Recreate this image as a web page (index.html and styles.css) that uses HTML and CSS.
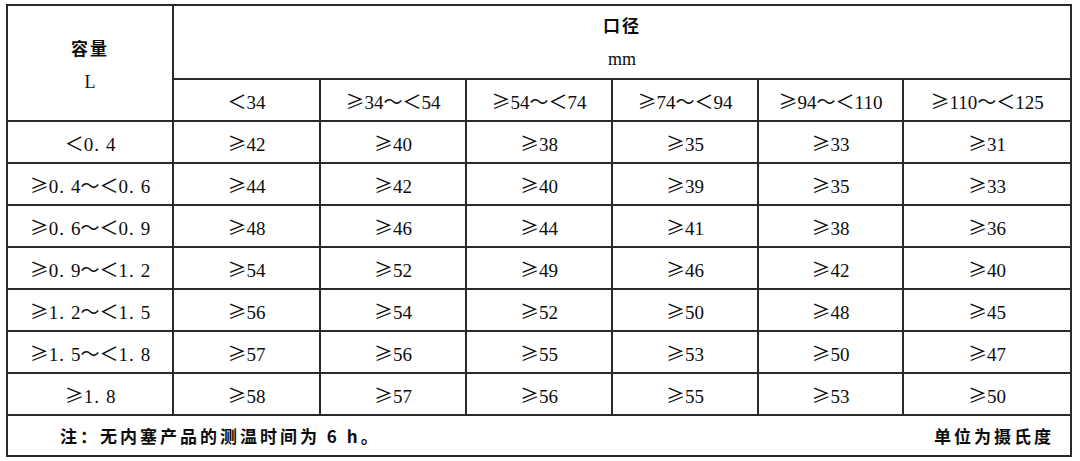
FILE: index.html
```html
<!DOCTYPE html>
<html lang="zh">
<head>
<meta charset="utf-8">
<title>容量与口径对照表</title>
<link rel="stylesheet" href="styles.css">
</head>
<body>
<div class="page">
<table class="t">
<colgroup>
<col class="c0"><col class="c1"><col class="c2"><col class="c3"><col class="c4"><col class="c5"><col class="c6">
</colgroup>
<tr class="h1">
<th rowspan="2" class="cap"><div class="ln">容量</div><div class="ln lat">L</div></th>
<th colspan="6" class="dia"><div class="ln">口径</div><div class="ln lat">mm</div></th>
</tr>
<tr class="r">
<td><span class="s">＜</span>34</td>
<td><span class="s">≥</span>34<span class="s">～</span><span class="s">＜</span>54</td>
<td><span class="s">≥</span>54<span class="s">～</span><span class="s">＜</span>74</td>
<td><span class="s">≥</span>74<span class="s">～</span><span class="s">＜</span>94</td>
<td><span class="s">≥</span>94<span class="s">～</span><span class="s">＜</span>110</td>
<td><span class="s">≥</span>110<span class="s">～</span><span class="s">＜</span>125</td>
</tr>
<tr class="r">
<td class="k"><span class="s">＜</span>0<span class="d">.</span>4</td>
<td><span class="s">≥</span>42</td><td><span class="s">≥</span>40</td><td><span class="s">≥</span>38</td><td><span class="s">≥</span>35</td><td><span class="s">≥</span>33</td><td><span class="s">≥</span>31</td>
</tr>
<tr class="r">
<td class="k"><span class="s">≥</span>0<span class="d">.</span>4<span class="s">～</span><span class="s">＜</span>0<span class="d">.</span>6</td>
<td><span class="s">≥</span>44</td><td><span class="s">≥</span>42</td><td><span class="s">≥</span>40</td><td><span class="s">≥</span>39</td><td><span class="s">≥</span>35</td><td><span class="s">≥</span>33</td>
</tr>
<tr class="r">
<td class="k"><span class="s">≥</span>0<span class="d">.</span>6<span class="s">～</span><span class="s">＜</span>0<span class="d">.</span>9</td>
<td><span class="s">≥</span>48</td><td><span class="s">≥</span>46</td><td><span class="s">≥</span>44</td><td><span class="s">≥</span>41</td><td><span class="s">≥</span>38</td><td><span class="s">≥</span>36</td>
</tr>
<tr class="r">
<td class="k"><span class="s">≥</span>0<span class="d">.</span>9<span class="s">～</span><span class="s">＜</span>1<span class="d">.</span>2</td>
<td><span class="s">≥</span>54</td><td><span class="s">≥</span>52</td><td><span class="s">≥</span>49</td><td><span class="s">≥</span>46</td><td><span class="s">≥</span>42</td><td><span class="s">≥</span>40</td>
</tr>
<tr class="r">
<td class="k"><span class="s">≥</span>1<span class="d">.</span>2<span class="s">～</span><span class="s">＜</span>1<span class="d">.</span>5</td>
<td><span class="s">≥</span>56</td><td><span class="s">≥</span>54</td><td><span class="s">≥</span>52</td><td><span class="s">≥</span>50</td><td><span class="s">≥</span>48</td><td><span class="s">≥</span>45</td>
</tr>
<tr class="r">
<td class="k"><span class="s">≥</span>1<span class="d">.</span>5<span class="s">～</span><span class="s">＜</span>1<span class="d">.</span>8</td>
<td><span class="s">≥</span>57</td><td><span class="s">≥</span>56</td><td><span class="s">≥</span>55</td><td><span class="s">≥</span>53</td><td><span class="s">≥</span>50</td><td><span class="s">≥</span>47</td>
</tr>
<tr class="r">
<td class="k"><span class="s">≥</span>1<span class="d">.</span>8</td>
<td><span class="s">≥</span>58</td><td><span class="s">≥</span>57</td><td><span class="s">≥</span>56</td><td><span class="s">≥</span>55</td><td><span class="s">≥</span>53</td><td><span class="s">≥</span>50</td>
</tr>
<tr class="note">
<td colspan="7"><div class="note-in"><span class="nl">注：无内塞产品的测温时间为 6 h。</span><span class="nr">单位为摄氏度</span></div></td>
</tr>
</table>
</div>
</body>
</html>
```

FILE: styles.css
```css
html, body {
  margin: 0;
  padding: 0;
  background: #ffffff;
}
.page {
  padding: 4px 0 0 6px;
}
.t {
  border-collapse: collapse;
  table-layout: fixed;
  width: 1065px;
  border: 2px solid #111;
  color: #0d0d0d;
  font-family: "Liberation Serif", "Noto Sans CJK SC", serif;
  font-size: 19px;
}
.c0 { width: 166px; }
.c1 { width: 147px; }
.c2 { width: 146px; }
.c3 { width: 146px; }
.c4 { width: 146px; }
.c5 { width: 145px; }
.c6 { width: 168px; }
.t th, .t td {
  border: 2px solid #2a2a2a;
  padding: 0;
  text-align: center;
  vertical-align: middle;
  white-space: nowrap;
}
.t th {
  font-weight: normal;
}
.h1 { height: 74px; }
.r { height: 42px; }
.note { height: 41px; }
.ln {
  font-family: "Noto Sans CJK SC", sans-serif;
  font-weight: 700;
  font-size: 17px;
  letter-spacing: 2px;
  line-height: 34px;
}
.ln.lat {
  font-family: "Liberation Serif", serif;
  font-weight: normal;
  font-size: 18px;
  letter-spacing: 0;
}
.cap {
  padding-top: 4px !important;
}
.s {
  display: inline-block;
  width: 1em;
  text-align: center;
  font-family: "Noto Sans CJK SC", sans-serif;
  font-weight: 400;
}
.d {
  margin: 0 7px 0 1px;
}
.note-in {
  display: flex;
  justify-content: space-between;
  align-items: center;
  padding: 0 16px 0 52px;
  font-family: "Noto Sans CJK SC", sans-serif;
  font-weight: 700;
  font-size: 17px;
  letter-spacing: 3px;
}
```
